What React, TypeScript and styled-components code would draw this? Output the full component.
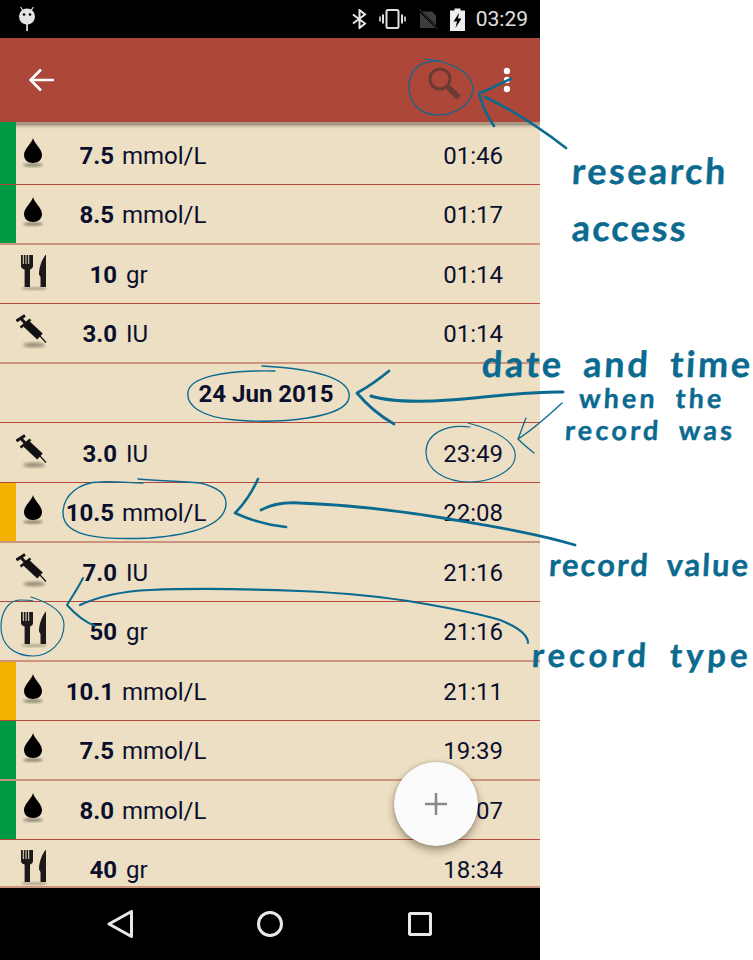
import React from "react";
import styled, { createGlobalStyle } from "styled-components";

const Global = createGlobalStyle`
  html, body { margin: 0; padding: 0; background: #fff; }
  #root { width: 753px; height: 960px; overflow: hidden; }
  * { box-sizing: border-box; }
`;

const Page = styled.div`
  position: relative;
  display: flex;
  width: 753px;
  height: 960px;
  background: #fff;
  font-family: Roboto, "Liberation Sans", sans-serif;
`;

const Phone = styled.div`
  position: relative;
  display: flex;
  flex-direction: column;
  width: 540px;
  height: 960px;
`;

const StatusBar = styled.div`
  display: flex;
  align-items: center;
  justify-content: space-between;
  flex: 0 0 38px;
  padding: 0 12px 0 18px;
  background: #000;
`;

const StatusGroup = styled.div`
  display: flex;
  align-items: center;
  gap: 12px;
`;

const Clock = styled.span`
  margin-left: -1px;
  color: #e0e0e0;
  font-size: 21px;
  line-height: 38px;
`;

const Toolbar = styled.header`
  display: flex;
  align-items: center;
  justify-content: space-between;
  flex: 0 0 84px;
  padding: 0 29px 0 29px;
  background: #ad473a;
`;

const ToolbarActions = styled.div`
  display: flex;
  align-items: center;
  gap: 39px;
`;

const List = styled.main`
  position: relative;
  flex: 1;
  overflow: hidden;
  background: #eddfc3;
  border-bottom: 2px solid #cc937e;
`;

const TopShadow = styled.div`
  position: absolute;
  top: 0;
  left: 16px;
  right: 0;
  height: 7px;
  background: linear-gradient(#aa9684 0 3px, #d3c4aa 4px, #eddfc3 7px);
`;

const Row = styled.div<{ $h: number; $soft?: boolean; $inset?: number }>`
  display: flex;
  align-items: stretch;
  height: ${(p) => p.$h}px;
  padding-top: ${(p) => p.$inset ?? 0}px;
  border-bottom: ${(p) => (p.$soft ? "2px solid #cc937e" : "1px solid #b5483a")};
  color: #0b0f2e;
  font-size: 24px;
`;

const Strip = styled.div<{ $color?: string; $inset?: number }>`
  flex: 0 0 16px;
  margin-top: -${(p) => p.$inset ?? 0}px;
  background: ${(p) => p.$color ?? "transparent"};
`;

const IconCell = styled.div`
  display: flex;
  align-items: center;
  flex: 0 0 36px;
`;

const Value = styled.div<{ $gap: number }>`
  display: flex;
  align-items: center;
  gap: ${(p) => p.$gap}px;
  padding-top: 2px;
`;

const Amount = styled.b<{ $width: number }>`
  width: ${(p) => p.$width}px;
  text-align: right;
  font-weight: 700;
  white-space: nowrap;
`;

const Unit = styled.span`
  white-space: nowrap;
`;

const Time = styled.div`
  display: flex;
  align-items: center;
  margin-left: auto;
  padding: 2px 37px 0 0;
`;

const DateHeading = styled.div`
  display: flex;
  align-items: center;
  justify-content: center;
  flex: 1;
  padding: 2px 8px 0 0;
  font-weight: 700;
`;

const Fab = styled.button`
  position: absolute;
  left: 394px;
  top: 762px;
  display: flex;
  align-items: center;
  justify-content: center;
  width: 84px;
  height: 84px;
  padding: 0;
  border: 0;
  border-radius: 50%;
  background: #fbfbfb;
  box-shadow: 0 4px 9px rgba(40, 25, 10, 0.4), 0 0 3px rgba(40, 25, 10, 0.2);
`;

const NavBar = styled.nav`
  display: flex;
  align-items: center;
  justify-content: center;
  gap: 122px;
  flex: 0 0 72px;
  background: #000;
`;

const Overlay = styled.svg`
  position: absolute;
  inset: 0;
  pointer-events: none;
`;

const Note = styled.span<{ $x: number; $y: number; $size: number; $spacing: number }>`
  position: absolute;
  left: ${(p) => p.$x}px;
  top: ${(p) => p.$y}px;
  color: #0b6a90;
  font-family: Lato, "Open Sans", sans-serif;
  font-size: ${(p) => p.$size}px;
  font-weight: 700;
  line-height: 1;
  letter-spacing: ${(p) => p.$spacing}px;
  word-spacing: 8px;
  white-space: nowrap;
  transform: skewX(-3deg);
  -webkit-text-stroke: 0.4px #0b6a90;
`;

const Drop = () => (
  <svg width="36" height="40" viewBox="0 0 36 40">
    <defs>
      <filter id="blurDrop"><feGaussianBlur stdDeviation="1.2" /></filter>
    </defs>
    <ellipse cx="17" cy="30" rx="10" ry="2" fill="#000" opacity=".35" filter="url(#blurDrop)" />
    <path d="M17 3C18 8 26 14 26 20C26 25 22 28 17 28C12 28 8 25 8 20C8 14 16 8 17 3Z" fill="#000" />
  </svg>
);

const Cutlery = () => (
  <svg width="36" height="40" viewBox="0 0 36 40">
    <defs>
      <filter id="blurFood"><feGaussianBlur stdDeviation="1" /></filter>
    </defs>
    <ellipse cx="18" cy="34.5" rx="13" ry="1.6" fill="#000" opacity=".25" filter="url(#blurFood)" />
    <path d="M5 1h1.8v9h1V1h1.7v9h1V1h1.7v9h1V1H17v11c0 2-1.5 3-3 3.5V33H8.600V15.500C6.500 15 5 14 5 12Z" fill="#1c1a18" />
    <path d="M30 0.500V33h-5.500V23L23 20.500C23 13 26 5 30 0.500Z" fill="#1c1a18" />
  </svg>
);

const Syringe = () => (
  <svg width="36" height="40" viewBox="0 0 36 40">
    <defs>
      <filter id="blurSyr"><feGaussianBlur stdDeviation="1.5" /></filter>
    </defs>
    <ellipse cx="18" cy="32" rx="11" ry="2.600" fill="#000" opacity=".35" filter="url(#blurSyr)" />
    <g stroke="#111" fill="none">
      <path d="M0.500 8L9 2.500" strokeWidth="3" />
      <path d="M4.500 5L10 11" strokeWidth="3" />
      <path d="M4.500 14.500L14.500 6.500" strokeWidth="2.500" />
      <path d="M10 10.500L24 23.500" strokeWidth="8" />
      <path d="M24 23L30 29.500" strokeWidth="1.200" />
    </g>
  </svg>
);

type Kind = "glucose" | "food" | "insulin";

const icons: Record<Kind, React.ReactElement> = {
  glucose: <Drop />,
  food: <Cutlery />,
  insulin: <Syringe />,
};

const units: Record<Kind, string> = { glucose: "mmol/L", food: "gr", insulin: "IU" };

type Entry = {
  kind?: Kind;
  amount?: string;
  time?: string;
  date?: string;
  strip?: string;
  h: number;
  soft?: boolean;
  inset?: number;
};

const GREEN = "#009a44";
const AMBER = "#f3b200";

const entries: Entry[] = [
  { kind: "glucose", amount: "7.5", time: "01:46", strip: GREEN, h: 63, inset: 3 },
  { kind: "glucose", amount: "8.5", time: "01:17", strip: GREEN, h: 60, soft: true },
  { kind: "food", amount: "10", time: "01:14", h: 59 },
  { kind: "insulin", amount: "3.0", time: "01:14", h: 60, soft: true },
  { date: "24 Jun 2015", h: 59 },
  { kind: "insulin", amount: "3.0", time: "23:49", h: 60 },
  { kind: "glucose", amount: "10.5", time: "22:08", strip: AMBER, h: 60, soft: true },
  { kind: "insulin", amount: "7.0", time: "21:16", h: 59 },
  { kind: "food", amount: "50", time: "21:16", h: 60, soft: true },
  { kind: "glucose", amount: "10.1", time: "21:11", strip: AMBER, h: 59 },
  { kind: "glucose", amount: "7.5", time: "19:39", strip: GREEN, h: 60, soft: true },
  { kind: "glucose", amount: "8.0", time: "19:07", strip: GREEN, h: 59 },
  { kind: "food", amount: "40", time: "18:34", h: 59 },
];

const INK = "#0b6a90";

export default function App() {
  return (
    <Page>
      <Global />
      <Phone>
        <StatusBar>
          <svg width="18" height="26" viewBox="0 0 18 26" fill="#e4e4e4">
            <path d="M2.500 1L5 4.500M15.500 1L13 4.500" stroke="#e4e4e4" strokeWidth="1.200" />
            <circle cx="9" cy="10.500" r="8" />
            <rect x="8.200" y="18" width="1.700" height="7" />
            <circle cx="6" cy="8.500" r="1.300" fill="#000" />
            <circle cx="12" cy="8.500" r="1.300" fill="#000" />
          </svg>
          <StatusGroup>
            <svg width="15" height="20" viewBox="0 0 15 20" fill="none" stroke="#e8e8e8" strokeWidth="2">
              <path d="M1 5.500L13 14.500L7.500 19V1L13 5.500L1 14.500" />
            </svg>
            <svg width="27" height="20" viewBox="0 0 27 20" fill="none" stroke="#e0e0e0">
              <rect x="7.500" y="1" width="12" height="18" rx="1.500" strokeWidth="2" />
              <path d="M4 5.500V14.500M23 5.500V14.500" strokeWidth="2" />
              <path d="M1 7.500V12.500M26 7.500V12.500" strokeWidth="1.600" />
            </svg>
            <svg width="20" height="20" viewBox="0 0 20 20">
              <path d="M2 2.500H14L18 6.500V19H2Z" fill="#3d3d3d" />
              <path d="M0.500 0.500L19.500 19.500" stroke="#000" strokeWidth="2.500" />
              <path d="M1 0L19.500 20" stroke="#3d3d3d" strokeWidth="1" />
            </svg>
            <svg width="15" height="23" viewBox="0 0 15 23">
              <path d="M4.500 0.500H10.500V2.500H15V23H0V2.500H4.500Z" fill="#eee" />
              <path d="M9 5L3.500 13.500H7L5.500 20L11.500 10.500H8Z" fill="#000" />
            </svg>
            <Clock>03:29</Clock>
          </StatusGroup>
        </StatusBar>
        <Toolbar>
          <svg width="26" height="26" viewBox="0 0 26 26" fill="none" stroke="#fff" strokeWidth="2.600">
            <path d="M1.500 13H25M12 2.500L1.500 13L12 23.500" />
          </svg>
          <ToolbarActions>
            <svg width="38" height="38" viewBox="0 -4 38 38" fill="none" stroke="#6b3a33" style={{ overflow: "visible" }}>
              <circle cx="14" cy="14" r="10" strokeWidth="3" />
              <path d="M21 21L23.500 23.500" strokeWidth="3" />
              <path d="M24 24L31 31" strokeWidth="6" strokeLinecap="round" />
            </svg>
            <svg width="8" height="26" viewBox="0 0 8 26" fill="#fff">
              <circle cx="4" cy="4" r="3.200" />
              <circle cx="4" cy="13" r="3.200" />
              <circle cx="4" cy="22" r="3.200" />
            </svg>
          </ToolbarActions>
        </Toolbar>
        <List>
          {entries.map((e, i) => (
            <Row key={i} $h={e.h} $soft={e.soft} $inset={e.inset}>
              {e.date ? (
                <DateHeading>{e.date}</DateHeading>
              ) : (
                <>
                  <Strip $color={e.strip} $inset={e.inset} />
                  <IconCell>{icons[e.kind as Kind]}</IconCell>
                  <Value $gap={e.kind === "glucose" ? 8 : 9}>
                    <Amount $width={e.kind === "glucose" ? 62 : 65}>{e.amount}</Amount>
                    <Unit>{units[e.kind as Kind]}</Unit>
                  </Value>
                  <Time>{e.time}</Time>
                </>
              )}
            </Row>
          ))}
          <TopShadow />
        </List>
        <NavBar>
          <svg width="28" height="28" viewBox="0 0 28 28" fill="none" stroke="#e8e8e8" strokeWidth="3" strokeLinejoin="round">
            <path d="M3 14L25.500 1.500V26.500Z" />
          </svg>
          <svg width="28" height="28" viewBox="0 0 28 28" fill="none" stroke="#e8e8e8" strokeWidth="3">
            <circle cx="14" cy="14" r="11.500" />
          </svg>
          <svg width="28" height="28" viewBox="0 0 28 28" fill="none" stroke="#e8e8e8" strokeWidth="3" strokeLinejoin="round">
            <rect x="3.500" y="3.500" width="21" height="21" rx="1" />
          </svg>
        </NavBar>
        <Fab aria-label="Add record">
          <svg width="22" height="22" viewBox="0 0 22 22" stroke="#8a8a8a" strokeWidth="2.600">
            <path d="M0 11H22M11 0V22" />
          </svg>
        </Fab>
      </Phone>

      <Overlay width="753" height="960" viewBox="0 0 753 960" fill="none" stroke={INK} strokeLinecap="round" strokeLinejoin="round">
        {/* search */}
        <path strokeWidth="1.200" d="M425 59C450 61 472 72 473 88C473 104 455 115 438 115C420 115 409 103 409 87C409 70 420 60 441 61" />
        <path strokeWidth="2.600" d="M511 79C498 84 490 90 479 93C482 105 487 116 494 126" />
        <path strokeWidth="2.600" d="M485 97C512 110 540 128 566 148" />
        {/* date */}
        <path strokeWidth="1.400" d="M262 366C320 369 352 380 349 398C345 418 280 424 235 420C200 417 186 405 188 392C190 378 220 370 275 371" />
        <path strokeWidth="2.800" d="M389 371C378 380 368 387 357 393C367 405 380 416 394 424" />
        <path strokeWidth="3" d="M371 396C390 402 420 402 450 400C490 397 530 391 563 392" />
        {/* time */}
        <path strokeWidth="1.200" d="M468 423C495 430 518 442 515 458C513 472 490 482 470 482C445 482 426 470 426 452C426 434 445 424 470 427" />
        <path strokeWidth="1.300" d="M562 403C548 416 532 430 518 439M526 418C523 425 521 432 518 439C523 444 529 449 534 453" />
        {/* value */}
        <path strokeWidth="1.400" d="M138 479C160 481 180 481 200 483C217 487 226 493 226 503C226 522 200 534 150 538C105 540 63 538 63 513C63 495 80 482 100 482C115 481 130 483 143 483" />
        <path strokeWidth="2.600" d="M258 479C252 492 245 503 235 513C250 520 267 525 286 527" />
        <path strokeWidth="2.800" d="M261 510C272 504 285 502 300 503C350 505 400 511 443 518C490 526 535 533 575 545" />
        {/* type */}
        <path strokeWidth="1.200" d="M31 597C50 603 64 612 64 625C64 642 50 656 33 656C14 656 1 645 1 627C1 610 10 600 20 600C25 600 30 600 33 601" />
        <path strokeWidth="2" d="M83 578C78 588 72 597 67 605C75 614 85 622 95 626" />
        <path strokeWidth="2.200" d="M80 605C100 596 125 591 150 590C200 588 250 589 300 591C345 593 385 597 420 603C455 609 480 614 500 620C515 626 528 634 528 643" />
      </Overlay>
      <Note $x={572} $y={152} $size={36} $spacing={2.500}>research</Note>
      <Note $x={572} $y={209} $size={36} $spacing={2.100}>access</Note>
      <Note $x={482} $y={345} $size={36} $spacing={2.750}>date and time</Note>
      <Note $x={579} $y={384} $size={27} $spacing={3.100}>when the</Note>
      <Note $x={565} $y={416} $size={27} $spacing={3.200}>record was</Note>
      <Note $x={549} $y={549} $size={31} $spacing={2}>record value</Note>
      <Note $x={532} $y={638} $size={33} $spacing={3.900}>record type</Note>
    </Page>
  );
}
